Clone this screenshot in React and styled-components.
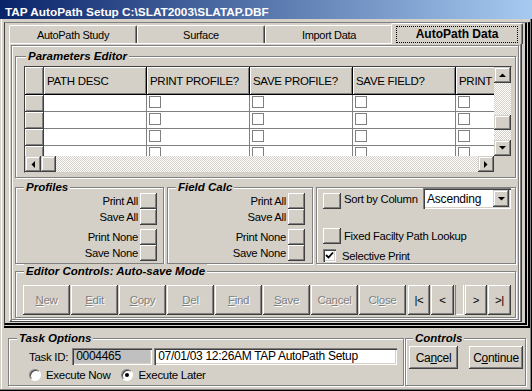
import React from 'react';
import styled, { createGlobalStyle, css } from 'styled-components';

const FACE = '#d4d0c8';
const SHADOW = '#808080';
const DARK = '#404040';

const GlobalStyle = createGlobalStyle`
  html, body { margin: 0; padding: 0; background: ${FACE}; }
  body { font-family: "Liberation Sans", Arial, sans-serif; }
  * { box-sizing: border-box; }
`;

const raised = css`
  background: ${FACE};
  box-shadow: inset -1px -1px ${DARK}, inset 1px 1px #fff, inset -2px -2px ${SHADOW}, inset 2px 2px ${FACE};
`;
const sunken = css`
  box-shadow: inset 1px 1px ${SHADOW}, inset 2px 2px ${DARK}, inset -1px -1px #fff, inset -2px -2px ${FACE};
`;
const dither = css`
  background-color: ${FACE};
  background-image: conic-gradient(#fff 25%, transparent 0 50%, #fff 0 75%, transparent 0);
  background-size: 2px 2px;
`;

const Window = styled.div`
  width: 532px;
  height: 391px;
  background: ${FACE};
  overflow: hidden;
  display: flex;
  flex-direction: column;
  font-size: 11px;
  letter-spacing: -0.3px;
  color: #000;
  box-shadow: inset -1px -1px #000, inset -2px -2px ${SHADOW}, inset 1px 0 ${FACE}, inset 2px 0 #fff;
`;

const TitleBar = styled.div`
  height: 19px;
  flex: none;
  background: linear-gradient(to right, #0a246a, #a6caf0);
  color: #fff;
  font-weight: bold;
  font-size: 11.8px;
  letter-spacing: 0;
  line-height: 15px;
  padding: 5px 0 0 5px;
  white-space: nowrap;
`;

const TabFrame = styled.div`
  margin: 3px 0 0 4px;
  width: 526px;
  flex: none;
  border-left: 1px solid ${DARK};
  border-top: 1px solid ${SHADOW};
  border-right: 5px double #000;
  border-bottom: 5px double #000;
  padding: 0 3px 1px 4px;
`;

const TabStrip = styled.div`
  display: flex;
  align-items: flex-end;
  height: 20px;
`;

const Tab = styled.div`
  width: 128px;
  height: 18px;
  flex: none;
  display: flex;
  align-items: center;
  justify-content: center;
  background: ${FACE};
  border-top: 1px solid #fff;
  border-left: 1px solid #fff;
  border-right: 1px solid ${DARK};
  border-top-left-radius: 2px;
  border-top-right-radius: 2px;
  box-shadow: inset -1px 0 ${SHADOW};
  ${p => p.$active && css`
    width: 132px;
    height: 21px;
    margin: 0 -2px -1px;
    position: relative;
    z-index: 1;
    font-weight: bold;
    font-size: 12px;
    letter-spacing: 0;
  `}
`;

const Focus = styled.span`
  display: flex;
  align-items: center;
  justify-content: center;
  width: 122px;
  height: 17px;
  border: 1px dotted #000;
`;

const TabPanel = styled.div`
  border-top: 1px solid #fff;
  border-left: 1px solid #fff;
  border-right: 1px solid ${DARK};
  border-bottom: 1px solid ${DARK};
  box-shadow: inset -1px -1px ${SHADOW};
  padding: 1px 2px 1px 1px;
`;

const InnerFrame = styled.div`
  border: 1px solid ${SHADOW};
  box-shadow: inset 1px 1px #fff, 1px 1px #fff;
  padding: 10px 2px 1px 3px;
  display: flex;
  flex-direction: column;
`;

const Group = styled.div`
  position: relative;
  flex: none;
  width: ${p => p.$w ? `${p.$w}px` : 'auto'};
  height: ${p => p.$h}px;
  margin-top: ${p => p.$mt || 0}px;
  border: 1px solid ${SHADOW};
  box-shadow: inset 1px 1px #fff, 1px 1px #fff;
  padding: ${p => p.$pad || '0'};
`;

const Legend = styled.span`
  position: absolute;
  top: -8px;
  left: ${p => p.$x}px;
  padding: 0 2px;
  background: ${FACE};
  font-weight: bold;
  font-style: italic;
  font-size: 11.5px;
  letter-spacing: 0;
  line-height: 14px;
  white-space: nowrap;
`;

/* ---------- grid ---------- */
const Grid = styled.div`
  width: 488px;
  height: 107px;
  border: 1px solid ${DARK};
  border-right-color: ${FACE};
  border-bottom-color: ${FACE};
  display: grid;
  grid-template-columns: 469px 17px;
  grid-template-rows: 89px 16px;
`;

const Table = styled.div`
  overflow: hidden;
  background: #fff;
  display: flex;
  flex-direction: column;
`;

const TRow = styled.div`
  display: flex;
  flex: none;
  height: ${p => p.$h}px;
`;

const RowHead = styled.div`
  width: 19px;
  flex: none;
  background: ${FACE};
  border-right: 1px solid ${DARK};
  border-bottom: 1px solid ${p => p.$head ? '#000' : DARK};
  box-shadow: inset 1px 1px #fff, inset -1px -1px ${SHADOW};
`;

const ColHead = styled.div`
  width: 103px;
  flex: none;
  background: ${FACE};
  border-right: 1px solid #000;
  border-bottom: 1px solid #000;
  box-shadow: inset 1px 1px #fff, inset -1px -1px ${SHADOW};
  display: flex;
  align-items: center;
  padding: 1px 0 0 3px;
  font-size: 11.5px;
  white-space: nowrap;
  overflow: hidden;
`;

const Cell = styled.div`
  width: 103px;
  flex: none;
  border-right: 1px solid ${SHADOW};
  border-bottom: 1px solid ${SHADOW};
  padding: 1px 0 0 2px;
`;

const GridCheck = styled.div`
  width: 12px;
  height: 12px;
  border: 1px solid ${SHADOW};
  background: #fff;
`;

const VScroll = styled.div`
  display: flex;
  flex-direction: column;
`;

const HScroll = styled.div`
  display: flex;
`;

const ScrollBtn = styled.div`
  width: ${p => p.$w || 16}px;
  height: ${p => p.$h || 16}px;
  flex: none;
  display: flex;
  align-items: center;
  justify-content: center;
  background: ${FACE};
  box-shadow: inset -1px -1px ${DARK}, inset 1px 1px ${FACE}, inset -2px -2px ${SHADOW}, inset 2px 2px #fff;
`;

const Track = styled.div`
  flex: 1;
  ${dither}
  display: flex;
  flex-direction: ${p => p.$vertical ? 'column' : 'row'};
  padding-top: ${p => p.$offset || 0}px;
`;

const Corner = styled.div`
  background: ${FACE};
`;

const Arrow = ({ dir }) => {
  const pts = {
    up: '0,4 7,4 3.5,0.5',
    down: '0,0 7,0 3.5,3.5',
    left: '4,0 4,7 0.5,3.5',
    right: '0,0 0,7 3.5,3.5',
  }[dir];
  const v = dir === 'up' || dir === 'down';
  return (
    <svg width={v ? 7 : 4} height={v ? 4 : 7} viewBox={v ? '0 0 7 4' : '0 0 4 7'}>
      <polygon points={pts} fill="#000" />
    </svg>
  );
};

/* ---------- middle ---------- */
const MiddleRow = styled.div`
  display: flex;
  gap: 3px;
  margin-top: 9px;
`;

const BtnColumn = styled.div`
  display: flex;
  flex-direction: column;
  align-items: flex-end;
  gap: ${p => p.$gap || 0}px;
`;

const BtnPair = styled.div`
  display: flex;
  flex-direction: column;
  align-items: flex-end;
`;

const LabeledBtn = styled.div`
  display: flex;
  align-items: center;
  gap: 2px;
  height: 16px;
  font-size: 11.3px;
`;

const SqButton = styled.div`
  width: ${p => p.$w || 17}px;
  height: 16px;
  flex: none;
  margin-top: ${p => p.$mt || 0}px;
  ${raised}
`;

const OptRow = styled.div`
  display: flex;
  align-items: ${p => p.$top ? 'flex-start' : 'center'};
  height: ${p => p.$h}px;
  margin-top: ${p => p.$mt || 0}px;
  font-size: 11.3px;
`;

const OptLabel = styled.span`
  margin-left: ${p => p.$ml || 3}px;
  margin-top: ${p => p.$mtop || 0}px;
  white-space: nowrap;
`;

const Combo = styled.div`
  margin-left: auto;
  width: 88px;
  height: 21px;
  background: #fff;
  ${sunken}
  display: flex;
  align-items: center;
  padding: 2px 2px 2px 4px;
  font-size: 12px;
  letter-spacing: -0.2px;
`;

const ComboText = styled.span`
  flex: 1;
`;

const ComboBtn = styled(ScrollBtn)`
  height: 17px;
`;

const CheckBox = styled.div`
  width: 13px;
  height: 13px;
  flex: none;
  background: #fff;
  ${sunken}
  display: flex;
  align-items: center;
  justify-content: center;
`;

/* ---------- editor ---------- */
const BtnBar = styled.div`
  display: flex;
  gap: 1px;
`;

const EdButton = styled.div`
  width: ${p => p.$w || 47}px;
  height: 30px;
  flex: none;
  margin-left: ${p => p.$ml || 0}px;
  ${raised}
  display: flex;
  align-items: center;
  justify-content: center;
  font-size: 11.5px;
  color: ${p => p.$disabled ? SHADOW : '#000'};
  text-shadow: ${p => p.$disabled ? '1px 1px 0 #fff' : 'none'};
`;

const NavGap = styled.div`
  width: 9px;
  height: 30px;
  flex: none;
  background: ${FACE};
  box-shadow: inset 1px 0 ${SHADOW}, inset -1px -1px #fff;
`;

/* ---------- bottom ---------- */
const BottomRow = styled.div`
  display: flex;
  gap: 1px;
  margin: 10px 0 0 8px;
`;

const FieldRow = styled.div`
  display: flex;
  align-items: center;
  height: ${p => p.$h || 17}px;
  font-size: 11.5px;
`;

const Field = styled.div`
  height: 17px;
  width: ${p => p.$w}px;
  margin-left: ${p => p.$ml || 0}px;
  background: ${p => p.$bg || '#fff'};
  ${sunken}
  padding: 2px 0 0 4px;
  line-height: 13px;
  font-size: 12px;
  letter-spacing: -0.3px;
  white-space: nowrap;
  overflow: hidden;
`;

const RadioRow = styled.div`
  display: flex;
  align-items: center;
  height: 14px;
  margin-top: 3px;
  font-size: 11.5px;
`;

const Radio = styled.div`
  width: 12px;
  height: 12px;
  flex: none;
  border-radius: 50%;
  background: #fff;
  border: 1px solid;
  border-color: ${SHADOW} #fff #fff ${SHADOW};
  box-shadow: inset 1px 1px ${DARK};
  display: flex;
  align-items: center;
  justify-content: center;
  margin-left: ${p => p.$ml || 0}px;
`;

const Dot = styled.div`
  width: 4px;
  height: 4px;
  border-radius: 50%;
  background: #000;
`;

const CtlButton = styled.div`
  width: ${p => p.$w}px;
  height: 23px;
  margin-left: ${p => p.$ml || 0}px;
  ${raised}
  display: flex;
  align-items: center;
  justify-content: center;
  font-size: 12px;
  letter-spacing: -0.3px;
`;

const U = styled.u`
  text-decoration: underline;
  text-underline-offset: 1px;
`;

const cols = ['PATH DESC', 'PRINT PROFILE?', 'SAVE PROFILE?', 'SAVE FIELD?', 'PRINT'];

function DataGrid() {
  const rows = [17, 17, 17, 17];
  return (
    <Grid>
      <Table>
        <TRow $h={28}>
          <RowHead $head />
          {cols.map(c => <ColHead key={c}>{c}</ColHead>)}
        </TRow>
        {rows.map((h, i) => (
          <TRow key={i} $h={h}>
            <RowHead />
            {cols.map((c, j) => (
              <Cell key={c}>{j > 0 && <GridCheck />}</Cell>
            ))}
          </TRow>
        ))}
      </Table>
      <VScroll>
        <ScrollBtn $w={17}><Arrow dir="up" /></ScrollBtn>
        <Track $vertical $offset={32}>
          <ScrollBtn $w={17} $h={15} />
        </Track>
        <ScrollBtn $w={17}><Arrow dir="down" /></ScrollBtn>
      </VScroll>
      <HScroll>
        <ScrollBtn><Arrow dir="left" /></ScrollBtn>
        <ScrollBtn $w={15} />
        <Track />
        <ScrollBtn><Arrow dir="right" /></ScrollBtn>
      </HScroll>
      <Corner />
    </Grid>
  );
}

function CalcButtons() {
  return (
    <BtnColumn $gap={4}>
      <BtnPair>
        <LabeledBtn>Print All<SqButton /></LabeledBtn>
        <LabeledBtn>Save All<SqButton /></LabeledBtn>
      </BtnPair>
      <BtnPair>
        <LabeledBtn>Print None<SqButton /></LabeledBtn>
        <LabeledBtn>Save None<SqButton /></LabeledBtn>
      </BtnPair>
    </BtnColumn>
  );
}

export default function App() {
  const edit = [
    <><U>N</U>ew</>,
    <><U>E</U>dit</>,
    <><U>C</U>opy</>,
    <><U>D</U>el</>,
    <><U>F</U>ind</>,
    <><U>S</U>ave</>,
    <>Ca<U>n</U>cel</>,
    <>Cl<U>o</U>se</>,
  ];
  return (
    <>
      <GlobalStyle />
      <Window>
        <TitleBar>{'TAP AutoPath Setup C:\\SLAT2003\\SLATAP.DBF'}</TitleBar>
        <TabFrame>
          <TabStrip>
            <Tab>AutoPath Study</Tab>
            <Tab>Surface</Tab>
            <Tab>Import Data</Tab>
            <Tab $active><Focus>AutoPath Data</Focus></Tab>
          </TabStrip>
          <TabPanel>
            <InnerFrame>
              <Group $h={122} $pad="9px 0 0 8px">
                <Legend $x={10}>Parameters Editor</Legend>
                <DataGrid />
              </Group>
              <MiddleRow>
                <Group $w={149} $h={77} $pad="5px 6px 0 0">
                  <Legend $x={8}>Profiles</Legend>
                  <CalcButtons />
                </Group>
                <Group $w={146} $h={77} $pad="5px 7px 0 0">
                  <Legend $x={8}>Field Calc</Legend>
                  <CalcButtons />
                </Group>
                <Group $w={200} $h={77} $pad="0 4px 0 6px">
                  <OptRow $h={22} $top>
                    <SqButton $w={18} $mt={5} />
                    <OptLabel $mtop={5}>Sort by Column</OptLabel>
                    <Combo>
                      <ComboText>Ascending</ComboText>
                      <ComboBtn><Arrow dir="down" /></ComboBtn>
                    </Combo>
                  </OptRow>
                  <OptRow $h={16} $mt={18}>
                    <SqButton $w={18} />
                    <OptLabel>Fixed Facilty Path Lookup</OptLabel>
                  </OptRow>
                  <OptRow $h={13} $mt={5}>
                    <CheckBox>
                      <svg width="9" height="9" viewBox="0 0 9 9">
                        <polyline points="1,4 3.5,6.5 8,1.5" fill="none" stroke="#000" strokeWidth="1.8" />
                      </svg>
                    </CheckBox>
                    <OptLabel $ml={6}>Selective Print</OptLabel>
                  </OptRow>
                </Group>
              </MiddleRow>
              <Group $h={47} $mt={7} $pad="13px 0 0 7px">
                <Legend $x={8}>Editor Controls: Auto-save Mode</Legend>
                <BtnBar>
                  {edit.map((label, i) => (
                    <EdButton key={i} $disabled>{label}</EdButton>
                  ))}
                  <EdButton $w={22} $ml={1}>|&lt;</EdButton>
                  <EdButton $w={23}>&lt;</EdButton>
                  <NavGap />
                  <EdButton $w={22}>&gt;</EdButton>
                  <EdButton $w={23}>&gt;|</EdButton>
                </BtnBar>
              </Group>
            </InnerFrame>
          </TabPanel>
        </TabFrame>
        <BottomRow>
          <Group $w={396} $h={48} $pad="9px 0 0 20px">
            <Legend $x={8}>Task Options</Legend>
            <FieldRow>
              <span>Task ID:</span>
              <Field $w={80} $ml={4} $bg="#c0c0c0">0004465</Field>
              <Field $w={243} $ml={2}>07/01/03 12:26AM TAP AutoPath Setup</Field>
            </FieldRow>
            <RadioRow>
              <Radio />
              <OptLabel $ml={5}>Execute Now</OptLabel>
              <Radio $ml={11}><Dot /></Radio>
              <OptLabel $ml={5}>Execute Later</OptLabel>
            </RadioRow>
          </Group>
          <Group $w={121} $h={48} $pad="7px 0 0 3px">
            <Legend $x={7}>Controls</Legend>
            <FieldRow $h={23}>
              <CtlButton $w={49}>Ca<U>n</U>cel</CtlButton>
              <CtlButton $w={54} $ml={11}>C<U>o</U>ntinue</CtlButton>
            </FieldRow>
          </Group>
        </BottomRow>
      </Window>
    </>
  );
}
